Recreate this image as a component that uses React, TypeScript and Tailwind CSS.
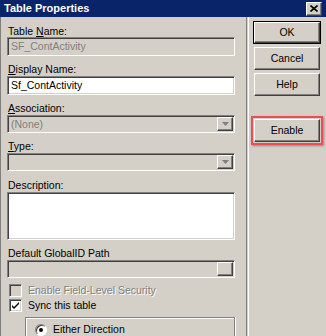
import React from "react";

const sunken =
  "border border-t-[#808080] border-l-[#808080] border-b-white border-r-white shadow-[inset_1px_1px_0_#404040,inset_-1px_-1px_0_#d4d0c8]";
const raised =
  "border border-t-white border-l-white border-b-[#404040] border-r-[#404040] shadow-[inset_-1px_-1px_0_#808080]";

function Label({ children, className = "" }: { children: React.ReactNode; className?: string }) {
  return <div className={`h-[12px] leading-[12px] pl-[1px] ${className}`}>{children}</div>;
}

function DropArrow() {
  return (
    <div className={`w-[16px] h-full bg-[#d4d0c8] flex items-center justify-center ${raised}`}>
      <svg width="7" height="4" viewBox="0 0 7 4">
        <path d="M0 0h7L3.5 4z" fill="#808080" />
      </svg>
    </div>
  );
}

function Select({ value }: { value?: string }) {
  return (
    <div className={`h-[18px] bg-[#d4d0c8] flex items-stretch p-[1px] ${sunken}`}>
      <div className="flex-1 pl-[2px] leading-[14px] text-[#808080]">{value}</div>
      <DropArrow />
    </div>
  );
}

function Button({ label, isDefault = false }: { label: string; isDefault?: boolean }) {
  const inner = (
    <div className={`h-full w-full flex items-center justify-center bg-[#d4d0c8] ${raised}`}>{label}</div>
  );
  return isDefault ? (
    <div className="h-[23px] border border-black">{inner}</div>
  ) : (
    <div className="h-[23px]">{inner}</div>
  );
}

export default function App() {
  return (
    <div
      className="w-[326px] h-[336px] overflow-hidden bg-[#d4d0c8] text-[10.5px] text-black flex flex-col"
      style={{ fontFamily: '"Liberation Sans", Arial, sans-serif' }}
    >
      <div className="h-[18px] bg-[#0a246a] flex items-center pl-[4px] pr-[4px]">
        <span className="flex-1 text-white font-bold text-[11px]">Table Properties</span>
        <div className={`w-[16px] h-[14px] bg-[#d4d0c8] flex items-center justify-center ${raised}`}>
          <svg width="8" height="7" viewBox="0 0 8 7">
            <path d="M0.5 0.5l7 6M7.5 0.5l-7 6" stroke="#000" strokeWidth="1.6" />
          </svg>
        </div>
      </div>

      <div className="flex-1 flex">
        <div className="w-[246px] border-l border-l-[#808080] pl-[6px] pr-[11px] pt-[8px] flex flex-col">
          <Label>
            Table <u>N</u>ame:
          </Label>
          <div className={`h-[19px] bg-[#d4d0c8] pl-[3px] leading-[17px] text-[#808080] ${sunken}`}>
            SF_ContActivity
          </div>

          <Label className="mt-[7px]">
            <u>D</u>isplay Name:
          </Label>
          <div className={`mt-[1px] h-[19px] bg-white pl-[3px] leading-[17px] ${sunken}`}>Sf_ContActivity</div>

          <Label className="mt-[7px]">
            <u>A</u>ssociation:
          </Label>
          <div className="mt-[1px]">
            <Select value="(None)" />
          </div>

          <Label className="mt-[7px]">
            <u>T</u>ype:
          </Label>
          <div className="mt-[1px]">
            <Select />
          </div>

          <Label className="mt-[8px]">Description:</Label>
          <div className={`mt-[1px] h-[48px] bg-white ${sunken}`}></div>

          <Label className="mt-[7px]">Default GlobalID Path</Label>
          <div className={`mt-[1px] h-[18px] bg-[#d4d0c8] flex justify-end p-[1px] ${sunken}`}>
            <div className={`w-[16px] h-full bg-[#d4d0c8] ${raised}`}></div>
          </div>

          <div className="mt-[6px] h-[13px] flex items-center gap-[6px] pl-[2px]">
            <div className={`w-[13px] h-[13px] bg-[#d4d0c8] ${sunken}`}></div>
            <span className="text-[#808080] [text-shadow:1px_1px_0_#fff]">Enable Field-Level Security</span>
          </div>
          <div className="mt-[2px] h-[13px] flex items-center gap-[6px] pl-[2px]">
            <div className={`w-[13px] h-[13px] bg-white flex items-center justify-center ${sunken}`}>
              <svg width="7" height="7" viewBox="0 0 7 7">
                <path d="M0 3l2 2 5-5v2L2 7 0 5z" fill="#000" />
              </svg>
            </div>
            <span>Sync this table</span>
          </div>

          <div className="mt-[5px] ml-[18px] flex-1 border-t border-l border-r border-t-[#808080] border-l-[#808080] border-r-[#808080] shadow-[inset_1px_1px_0_#fff,1px_0_0_#fff] pl-[9px] pt-[6px]">
            <div className="flex items-center gap-[6px] h-[12px]">
              <div className="w-[12px] h-[12px] rounded-full bg-white border border-t-[#808080] border-l-[#808080] border-b-white border-r-white flex items-center justify-center shadow-[inset_1px_1px_0_#404040]">
                <div className="w-[4px] h-[4px] rounded-full bg-black"></div>
              </div>
              <span>Either Direction</span>
            </div>
          </div>
        </div>

        <div className="w-[3px] border-l border-l-[#808080] border-r border-r-white"></div>

        <div className="flex-1 pl-[4px] pr-[5px] pt-[4px] flex flex-col">
          <Button label="OK" isDefault />
          <div className="mt-[3px] mx-[1px]">
            <Button label="Cancel" />
          </div>
          <div className="mt-[3px] mx-[1px]">
            <Button label="Help" />
          </div>
          <div className="mt-[20px] -mx-[2px] border-2 border-[#ee4b52] p-[1px] shadow-[1px_1px_2px_rgba(0,0,0,0.35)]">
            <Button label="Enable" />
          </div>
        </div>
      </div>
    </div>
  );
}
